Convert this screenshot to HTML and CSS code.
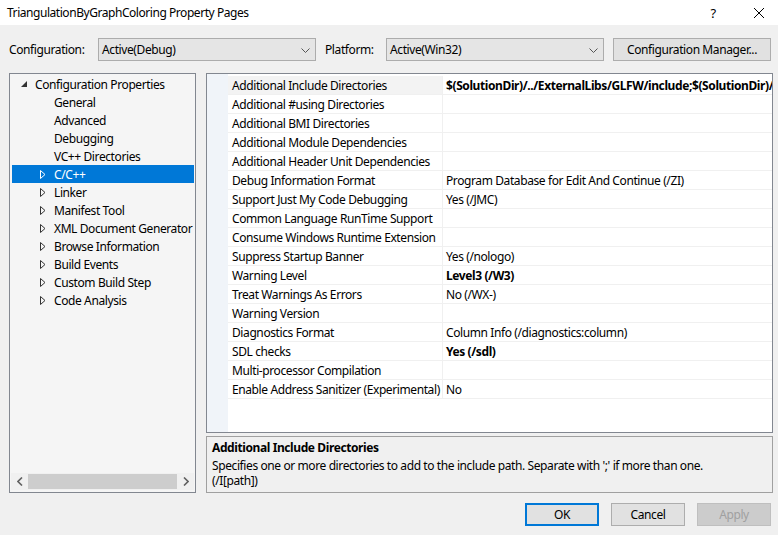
FILE: index.html
```html
<!DOCTYPE html>
<html>
<head>
<meta charset="utf-8">
<link rel="stylesheet" href="styles.css">
</head>
<body>
<div class="window">
  <div class="titlebar">
    <span class="title">TriangulationByGraphColoring Property Pages</span>
    <span class="tb-help">?</span>
    <span class="tb-close"><svg width="12" height="12" viewBox="0 0 12 12"><path d="M1 1L11 11M11 1L1 11" stroke="#000" stroke-width="1" fill="none"/></svg></span>
  </div>
  <div class="config-row">
    <span class="lbl lbl-config">Configuration:</span>
    <div class="combo combo-config"><span>Active(Debug)</span><svg class="chev" width="9" height="5" viewBox="0 0 9 5"><path d="M0.5 0.5L4.5 4.5L8.5 0.5" stroke="#555" fill="none"/></svg></div>
    <span class="lbl lbl-platform">Platform:</span>
    <div class="combo combo-platform"><span>Active(Win32)</span><svg class="chev" width="9" height="5" viewBox="0 0 9 5"><path d="M0.5 0.5L4.5 4.5L8.5 0.5" stroke="#555" fill="none"/></svg></div>
    <div class="btn btn-cm">Configuration Manager...</div>
  </div>
  <div class="main">
    <div class="tree">
      <div class="tree-items">
        <div class="ti lvl0"><svg class="exp" width="7" height="7" viewBox="0 0 7 7"><path d="M6 0L6 6L0 6Z" fill="#333"/></svg><span>Configuration Properties</span></div>
        <div class="ti lvl1"><span>General</span></div>
        <div class="ti lvl1"><span>Advanced</span></div>
        <div class="ti lvl1"><span>Debugging</span></div>
        <div class="ti lvl1"><span>VC++ Directories</span></div>
        <div class="ti lvl1 sel"><svg class="col" width="6" height="9" viewBox="0 0 6 9"><path d="M0.5 0.5L5 4.5L0.5 8.5Z" stroke="#fff" fill="none"/></svg><span>C/C++</span></div>
        <div class="ti lvl1"><svg class="col" width="6" height="9" viewBox="0 0 6 9"><path d="M0.5 0.5L5 4.5L0.5 8.5Z" stroke="#333" fill="none"/></svg><span>Linker</span></div>
        <div class="ti lvl1"><svg class="col" width="6" height="9" viewBox="0 0 6 9"><path d="M0.5 0.5L5 4.5L0.5 8.5Z" stroke="#333" fill="none"/></svg><span>Manifest Tool</span></div>
        <div class="ti lvl1"><svg class="col" width="6" height="9" viewBox="0 0 6 9"><path d="M0.5 0.5L5 4.5L0.5 8.5Z" stroke="#333" fill="none"/></svg><span>XML Document Generator</span></div>
        <div class="ti lvl1"><svg class="col" width="6" height="9" viewBox="0 0 6 9"><path d="M0.5 0.5L5 4.5L0.5 8.5Z" stroke="#333" fill="none"/></svg><span>Browse Information</span></div>
        <div class="ti lvl1"><svg class="col" width="6" height="9" viewBox="0 0 6 9"><path d="M0.5 0.5L5 4.5L0.5 8.5Z" stroke="#333" fill="none"/></svg><span>Build Events</span></div>
        <div class="ti lvl1"><svg class="col" width="6" height="9" viewBox="0 0 6 9"><path d="M0.5 0.5L5 4.5L0.5 8.5Z" stroke="#333" fill="none"/></svg><span>Custom Build Step</span></div>
        <div class="ti lvl1"><svg class="col" width="6" height="9" viewBox="0 0 6 9"><path d="M0.5 0.5L5 4.5L0.5 8.5Z" stroke="#333" fill="none"/></svg><span>Code Analysis</span></div>
      </div>
      <div class="hscroll">
        <div class="sb-arrow"><svg width="6" height="9" viewBox="0 0 6 9"><path d="M5 0.5L1 4.5L5 8.5" stroke="#606060" stroke-width="1.6" fill="none"/></svg></div>
        <div class="sb-thumb"></div>
        <div class="sb-arrow"><svg width="6" height="9" viewBox="0 0 6 9"><path d="M1 0.5L5 4.5L1 8.5" stroke="#606060" stroke-width="1.6" fill="none"/></svg></div>
      </div>
    </div>
    <div class="right">
      <div class="grid">
        <div class="row first"><div class="gut"></div><div class="name">Additional Include Directories</div><div class="val b">$(SolutionDir)/../ExternalLibs/GLFW/include;$(SolutionDir)/../ExternalLibs/GLAD</div></div>
        <div class="row"><div class="gut"></div><div class="name">Additional #using Directories</div><div class="val"></div></div>
        <div class="row"><div class="gut"></div><div class="name">Additional BMI Directories</div><div class="val"></div></div>
        <div class="row"><div class="gut"></div><div class="name">Additional Module Dependencies</div><div class="val"></div></div>
        <div class="row"><div class="gut"></div><div class="name">Additional Header Unit Dependencies</div><div class="val"></div></div>
        <div class="row"><div class="gut"></div><div class="name">Debug Information Format</div><div class="val">Program Database for Edit And Continue (/ZI)</div></div>
        <div class="row"><div class="gut"></div><div class="name">Support Just My Code Debugging</div><div class="val">Yes (/JMC)</div></div>
        <div class="row"><div class="gut"></div><div class="name">Common Language RunTime Support</div><div class="val"></div></div>
        <div class="row"><div class="gut"></div><div class="name">Consume Windows Runtime Extension</div><div class="val"></div></div>
        <div class="row"><div class="gut"></div><div class="name">Suppress Startup Banner</div><div class="val">Yes (/nologo)</div></div>
        <div class="row"><div class="gut"></div><div class="name">Warning Level</div><div class="val b">Level3 (/W3)</div></div>
        <div class="row"><div class="gut"></div><div class="name">Treat Warnings As Errors</div><div class="val">No (/WX-)</div></div>
        <div class="row"><div class="gut"></div><div class="name">Warning Version</div><div class="val"></div></div>
        <div class="row"><div class="gut"></div><div class="name">Diagnostics Format</div><div class="val">Column Info (/diagnostics:column)</div></div>
        <div class="row"><div class="gut"></div><div class="name">SDL checks</div><div class="val b">Yes (/sdl)</div></div>
        <div class="row"><div class="gut"></div><div class="name">Multi-processor Compilation</div><div class="val"></div></div>
        <div class="row"><div class="gut"></div><div class="name">Enable Address Sanitizer (Experimental)</div><div class="val">No</div></div>
      </div>
      <div class="desc">
        <div class="desc-title">Additional Include Directories</div>
        <div class="desc-text">Specifies one or more directories to add to the include path. Separate with ';' if more than one.<br>(/I[path])</div>
      </div>
    </div>
  </div>
  <div class="buttons">
    <div class="btn btn-ok">OK</div>
    <div class="btn">Cancel</div>
    <div class="btn disabled">Apply</div>
  </div>
</div>
</body>
</html>
```
FILE: styles.css
```css
* { box-sizing: border-box; }
html, body { margin: 0; padding: 0; }
body {
  background: #f0f0f0;
  font-family: "Noto Sans", "Open Sans", sans-serif;
  font-size: 12px;
  letter-spacing: -0.4px;
  color: #000;
  width: 778px;
  height: 535px;
  overflow: hidden;
}
.window { width: 778px; height: 535px; }
.titlebar {
  height: 25px;
  background: #fff;
  display: flex;
  align-items: center;
  padding-left: 7px;
}
.title { flex: 1; font-size: 12px; letter-spacing: -0.45px; }
.tb-help { width: 46px; text-align: center; margin-right: 4px; font-size: 13px; }
.tb-close { width: 38px; display: flex; justify-content: center; align-items: center; }
.config-row {
  display: flex;
  align-items: center;
  height: 23px;
  margin-top: 13px;
  padding-left: 9px;
}
.lbl { white-space: nowrap; }
.lbl-config { width: 89px; }
.lbl-platform { width: 61px; }
.combo {
  height: 23px;
  background: #e5e5e5;
  border: 1px solid #acacac;
  display: flex;
  align-items: center;
  justify-content: space-between;
  padding: 0 5px 0 3px;
}
.combo-config { width: 218px; margin-right: 9px; }
.combo-platform { width: 218px; margin-right: 9px; }
.chev { margin-top: 1px; }
.btn {
  height: 23px;
  border: 1px solid #adadad;
  background: #e1e1e1;
  display: flex;
  align-items: center;
  justify-content: center;
  width: 74px;
}
.btn-cm { width: 158px; }
.main {
  display: flex;
  gap: 10px;
  margin-top: 12px;
  padding-left: 9px;
}
.tree {
  width: 187px;
  height: 420px;
  border: 1px solid #828790;
  background: #f5f5f5;
  padding: 1px;
  display: flex;
  flex-direction: column;
}
.tree-items { flex: 1; overflow: hidden; }
.ti {
  height: 18px;
  display: flex;
  align-items: center;
  white-space: nowrap;
  position: relative;
}
.ti.lvl0 { padding-left: 24px; }
.ti.lvl1 { padding-left: 43px; }
.ti .exp { position: absolute; left: 10px; top: 6px; }
.ti .col { position: absolute; left: 29px; top: 5px; }
.ti.sel { background: #0078d7; color: #fff; margin-left: 1px; padding-left: 42px; }
.ti.sel .col { left: 28px; }
.hscroll {
  height: 17px;
  display: flex;
  background: #f0f0f0;
  margin-bottom: 1px;
}
.sb-arrow { width: 17px; display: flex; align-items: center; justify-content: center; }
.sb-thumb { flex: 1; background: #cdcdcd; margin: 1px 0; }
.right {
  width: 567px;
  display: flex;
  flex-direction: column;
  gap: 3px;
}
.grid {
  height: 360px;
  border: 1px solid #828790;
  background: #fff;
  padding-top: 2px;
  overflow: hidden;
  background-image: linear-gradient(#f0f4f9, #f0f4f9);
  background-size: 21px 100%;
  background-repeat: no-repeat;
}
.row {
  display: flex;
  height: 19px;
}
.gut { width: 21px; flex: none; background: #f0f4f9; }
.name {
  width: 215px;
  flex: none;
  padding-left: 4px;
  padding-top: 1px;
  border-right: 1px solid #f0f0f0;
  border-bottom: 1px solid #f0f0f0;
  white-space: nowrap;
  overflow: hidden;
  line-height: 17px;
}
.val {
  flex: 1;
  padding-left: 3px;
  padding-top: 1px;
  border-bottom: 1px solid #f0f0f0;
  white-space: nowrap;
  overflow: hidden;
  line-height: 17px;
}
.row.first .name { background: #f3f3f3; }
.b { font-weight: bold; }
.desc {
  height: 57px;
  border: 1px solid #a0a0a0;
  background: #f0f0f0;
  padding: 3px 5px;
}
.desc-title { font-weight: bold; line-height: 15px; margin-bottom: 3px; }
.desc-text { line-height: 15px; }
.buttons {
  display: flex;
  justify-content: flex-end;
  gap: 12px;
  padding-right: 7px;
  margin-top: 10px;
}
.btn-ok { border: 2px solid #0078d7; }
.btn.disabled { color: #a0a0a0; background: #cccccc; border-color: #bfbfbf; }
```
